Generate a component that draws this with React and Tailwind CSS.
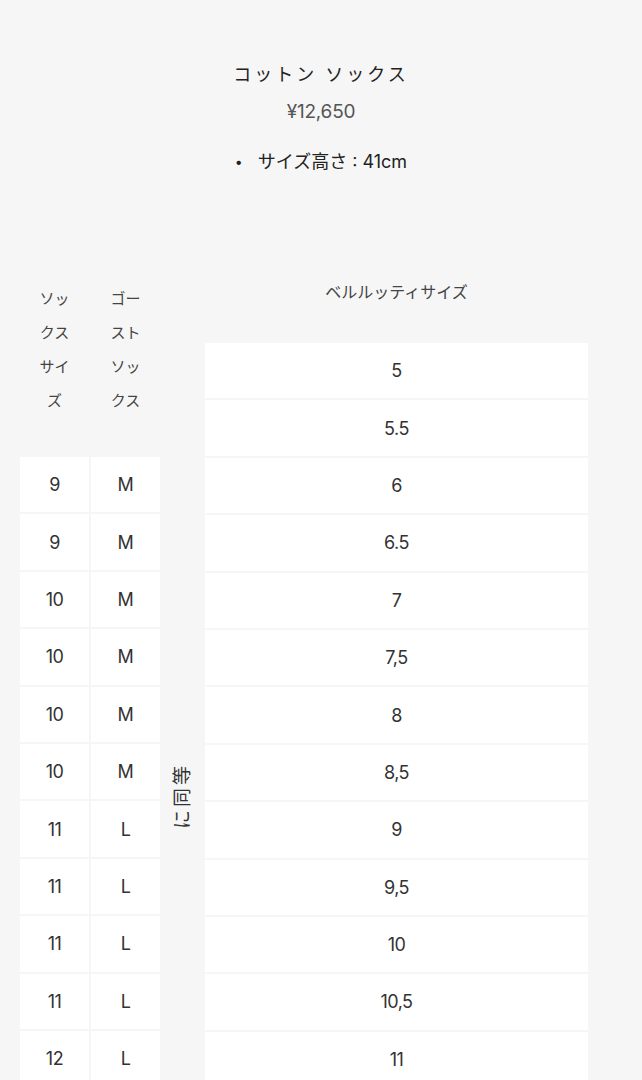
const FONT = { fontFamily: 'Inter, "Noto Sans CJK JP", sans-serif' }

const BERLUTI = ['5', '5.5', '6', '6.5', '7', '7,5', '8', '8,5', '9', '9,5', '10', '10,5', '11', '11,5']

const SOCKS = [
  ['9', 'M'],
  ['9', 'M'],
  ['10', 'M'],
  ['10', 'M'],
  ['10', 'M'],
  ['10', 'M'],
  ['11', 'L'],
  ['11', 'L'],
  ['11', 'L'],
  ['11', 'L'],
  ['12', 'L'],
  ['12', 'L'],
]

export default function App() {
  return (
    <div className="min-h-screen bg-[#f6f6f6] text-[#333]" style={FONT}>
      <div className="pt-[62px] flex flex-col items-center">
        <h1 className="text-[18px] leading-[26px] tracking-[3px] text-[#222] font-normal">コットン ソックス</h1>
        <p className="mt-[12px] text-[19px] leading-[24px] tracking-[-0.2px] text-[#555]">¥12,650</p>
        <ul className="mt-[25px] flex items-center text-[18px] leading-[26px] text-[#222]">
          <li className="flex items-center gap-[15px]">
            <span className="text-[14px]">•</span>
            <span>サイズ高さ : 41cm</span>
          </li>
        </ul>
      </div>

      <div className="mt-[94px] ml-[20px] flex items-start">
        {/* sock sizes */}
        <div className="w-[140px]">
          <div className="h-[188px] pt-[13px] grid grid-cols-[69px_69px] gap-x-[2px] text-[15px] leading-[34px] text-[#444]">
            <div className="text-center px-[16px]">ソッ<br />クス<br />サイ<br />ズ</div>
            <div className="text-center px-[16px]">ゴー<br />スト<br />ソッ<br />クス</div>
          </div>
          <div className="grid grid-cols-[69px_69px] gap-x-[2px] gap-y-[2px] text-[18px] tracking-[-0.5px]">
            {SOCKS.map(([size, ghost], i) => (
              <div key={i} className="contents">
                <div className="h-[55.4px] bg-white flex items-center justify-center">{size}</div>
                <div className="h-[55.4px] bg-white flex items-center justify-center">{ghost}</div>
              </div>
            ))}
          </div>
        </div>

        {/* equivalence label */}
        <div className="w-[45px] flex justify-center pt-[516px]">
          <div className="h-[22px] flex items-center justify-center -rotate-90 whitespace-nowrap text-[19px] tracking-[3px] text-[#333]">
            に同等
          </div>
        </div>

        {/* berluti sizes */}
        <div className="w-[383px]">
          <div className="h-[74px] pt-[11px] text-center text-[16px] leading-[24px] text-[#444]">ベルルッティサイズ</div>
          <div className="flex flex-col gap-[2px] text-[18px] tracking-[-0.5px]">
            {BERLUTI.map((s) => (
              <div key={s} className="h-[55.4px] bg-white flex items-center justify-center">{s}</div>
            ))}
          </div>
        </div>
      </div>
    </div>
  )
}
